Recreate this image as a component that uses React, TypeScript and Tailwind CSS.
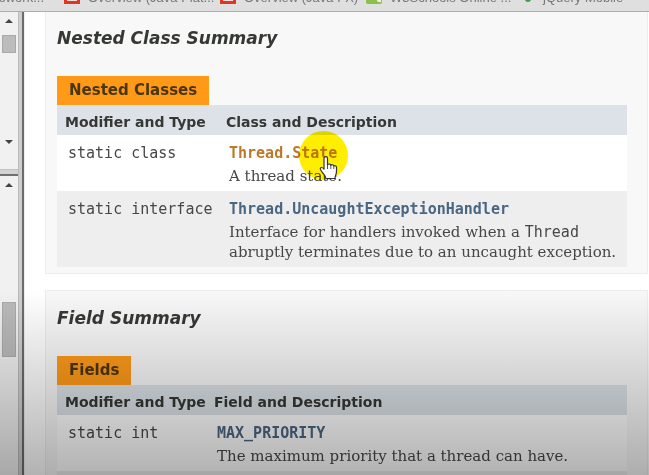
import React from "react";

type Row = { modifier: string; name: string; hot?: boolean; description: React.ReactNode };

const bookmarks = [
  { label: "Webwork...", icon: "none", layout: "w-16 justify-end pr-5" },
  { label: "Overview (Java Plat...", icon: "java", layout: "w-[156px]" },
  { label: "Overview (Java FX)", icon: "java", layout: "w-[146px]" },
  { label: "W3Schools Online ...", icon: "w3", layout: "w-[153px]" },
  { label: "jQuery Mobile", icon: "jquery", layout: "w-[120px]" },
];

function BookmarkIcon({ kind }: { kind: string }) {
  if (kind === "java") {
    return (
      <svg className="size-4 shrink-0" viewBox="0 0 16 16" aria-hidden="true">
        <rect x="1.5" y="1.5" width="13" height="13" fill="#f4dcd8" stroke="#e03526" strokeWidth="3" />
      </svg>
    );
  }
  if (kind === "w3") {
    return (
      <svg className="size-4 shrink-0" viewBox="0 0 16 16" aria-hidden="true">
        <rect width="16" height="16" rx="2" fill="#8cbf4b" />
        <path d="M10 11l5 1v2h-3z" fill="#edf5df" />
      </svg>
    );
  }
  if (kind === "jquery") {
    return (
      <svg className="size-4 shrink-0" viewBox="0 0 16 16" aria-hidden="true">
        <circle cx="9" cy="11" r="3" fill="#3d9b46" />
      </svg>
    );
  }
  return null;
}

function BookmarksBar() {
  return (
    <nav className="flex h-3 shrink-0 items-end overflow-hidden border-b border-[#adadad] bg-[#e0dfdf] pb-[7px] font-['Liberation_Sans',sans-serif] text-[13px] leading-3 text-[#777]">
      {bookmarks.map((b) => (
        <a key={b.label} href="#" className={`flex shrink-0 items-end gap-2 whitespace-nowrap ${b.layout}`}>
          <BookmarkIcon kind={b.icon} />
          <span>{b.label}</span>
        </a>
      ))}
    </nav>
  );
}

function Arrow({ down }: { down?: boolean }) {
  return (
    <svg className="h-2 w-2" viewBox="0 0 8 8" aria-hidden="true">
      <path d={down ? "M0 2h8L4 6z" : "M0 6h8L4 2z"} fill="#444" />
    </svg>
  );
}

function SideFrames() {
  return (
    <aside className="flex w-[25px] shrink-0 border-r border-[#eee] bg-[#f1f1f1]">
      <div className="flex w-[18px] flex-col">
        <div className="flex h-[157px] flex-col items-end pt-[5px] pr-[5px]">
          <Arrow />
          <div className="mt-[10px] -mr-[3px] h-[18px] w-[14px] border border-[#a8a8a8] bg-[#bcbcbc]" />
          <div className="mt-auto flex pb-[23px]">
            <Arrow down />
          </div>
        </div>
        <div className="h-[7px] shrink-0 border-t border-b-2 border-t-[#c4c4c4] border-b-[#707070] bg-[#d2d2d2]" />
        <div className="flex flex-1 flex-col items-end pt-[5px] pr-[5px]">
          <Arrow />
          <div className="mt-[113px] -mr-[3px] h-[55px] w-[14px] border border-[#aaa] bg-[#bababa]" />
        </div>
      </div>
      <div className="w-1 border-l border-[#bbb] bg-[#cecece]" />
      <div className="w-[2px] bg-[#6c6c6c]" />
    </aside>
  );
}

function Summary({
  title,
  caption,
  columns,
  firstColumn,
  rows,
}: {
  title: string;
  caption: string;
  columns: [string, string];
  firstColumn: string;
  rows: Row[];
}) {
  return (
    <section className="border border-[#ededed] bg-[#f8f8f8] pt-[17px] pr-5 pb-[6px] pl-[11px] text-[#474747]">
      <h3 className="font-['DejaVu_Sans',sans-serif] text-[17px] leading-5 font-bold text-[#353833] italic">{title}</h3>
      <table className="mt-7 w-full border-collapse text-left">
        <caption className="text-left">
          <span className="inline-block bg-[#ff9a19] px-3 align-top font-['DejaVu_Sans',sans-serif] text-[15px] leading-[29px] font-bold text-[#4a3511]">
            {caption}
          </span>
        </caption>
        <thead>
          <tr className="h-[30px] bg-[#dce2e8] font-['DejaVu_Sans',sans-serif] text-[14px] leading-5 whitespace-nowrap text-[#353833]">
            <th className={`pt-1 pl-2 ${firstColumn}`}>{columns[0]}</th>
            <th className="pt-1">{columns[1]}</th>
          </tr>
        </thead>
        <tbody className="font-['DejaVu_Serif',serif] text-[15px] leading-5">
          {rows.map((r) => (
            <tr key={r.name} className="align-top odd:bg-white even:bg-[#eeeeef]">
              <td className="pt-2 pl-[11px] font-['DejaVu_Sans_Mono',monospace] whitespace-nowrap">{r.modifier}</td>
              <td className="pt-2 pb-[5px] pl-[3px]">
                <a
                  href="#"
                  className={`block font-['DejaVu_Sans_Mono',monospace] font-bold ${r.hot ? "text-[#bb7a2a]" : "text-[#4a6782]"}`}
                >
                  {r.name}
                </a>
                <p className="mt-[3px]">{r.description}</p>
              </td>
            </tr>
          ))}
        </tbody>
      </table>
    </section>
  );
}

function Pointer() {
  return (
    <>
      <div className="absolute top-[131px] left-[299px] size-[49px] rounded-full bg-[#ffee00] mix-blend-multiply" />
      <svg className="absolute top-[155px] left-[317px] h-[25px] w-[22px]" viewBox="0 0 22 25" aria-hidden="true">
        <path
          d="M7 14V3.500c0-2.500 3.500-2.500 3.500 0V10c.5-1.500 3-1.300 3.300.5.500-1.200 2.700-1 3 .7.700-1 2.700-.6 2.700 1.300v4c0 3-1.500 4-1.500 7H9c0-2.500-3.500-5-5.500-9-.8-2 1.200-3 3.500-.5z"
          fill="#fff"
          stroke="#333"
          strokeWidth="1.200"
          strokeLinejoin="round"
        />
        <path d="M10.500 10v4M13.800 10.500V14M16.800 11.200V14" stroke="#555" strokeWidth="1" fill="none" />
      </svg>
    </>
  );
}

export default function App() {
  return (
    <div className="relative flex h-screen flex-col overflow-hidden bg-white">
      <BookmarksBar />
      <div className="flex min-h-0 flex-1">
        <SideFrames />
        <main className="min-w-0 flex-1 overflow-hidden pr-px pl-5">
          <div className="-mt-[2px] flex flex-col gap-4">
            <Summary
              title="Nested Class Summary"
              caption="Nested Classes"
              columns={["Modifier and Type", "Class and Description"]}
              firstColumn="w-[169px]"
              rows={[
                { modifier: "static class", name: "Thread.State", hot: true, description: "A thread state." },
                {
                  modifier: "static interface",
                  name: "Thread.UncaughtExceptionHandler",
                  description: (
                    <>
                      Interface for handlers invoked when a{" "}
                      <code className="font-['DejaVu_Sans_Mono',monospace] text-[15px]">Thread</code> abruptly
                      terminates due to an uncaught exception.
                    </>
                  ),
                },
              ]}
            />
            <Summary
              title="Field Summary"
              caption="Fields"
              columns={["Modifier and Type", "Field and Description"]}
              firstColumn="w-[157px]"
              rows={[
                {
                  modifier: "static int",
                  name: "MAX_PRIORITY",
                  description: "The maximum priority that a thread can have.",
                },
                {
                  modifier: "static int",
                  name: "MIN_PRIORITY",
                  description: "The minimum priority that a thread can have.",
                },
              ]}
            />
          </div>
        </main>
      </div>
      <Pointer />
      <div className="pointer-events-none absolute inset-x-0 bottom-0 h-[185px] bg-linear-to-b from-black/0 to-black/30" />
    </div>
  );
}
